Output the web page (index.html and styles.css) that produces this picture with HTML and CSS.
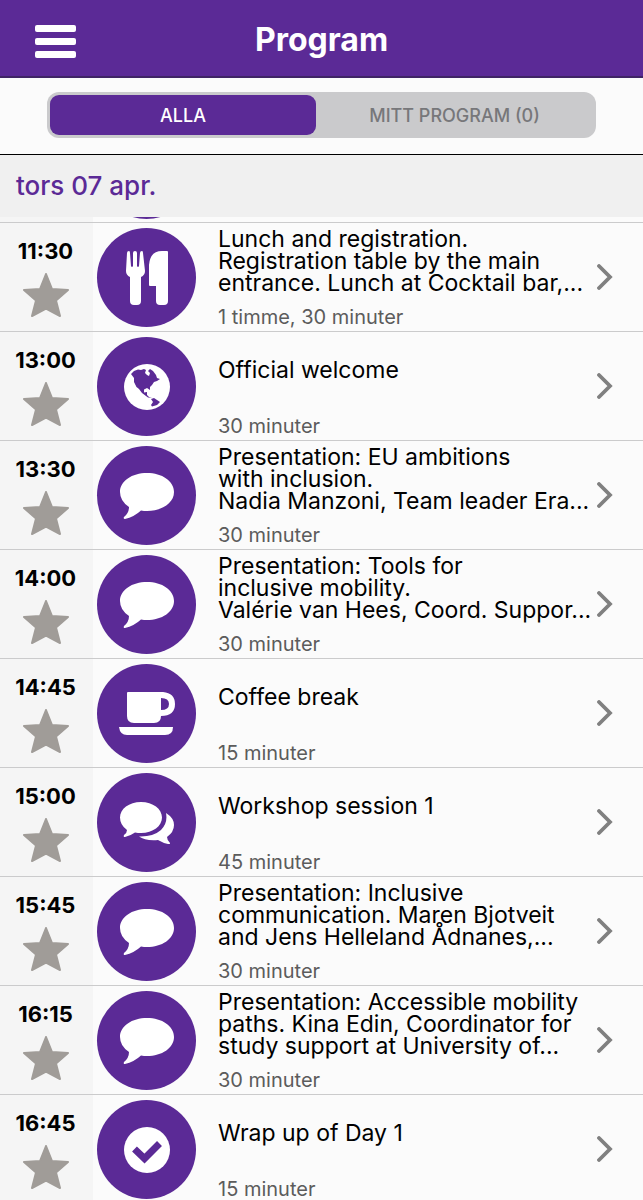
FILE: index.html
```html
<!DOCTYPE html>
<html lang="sv">
<head>
<meta charset="UTF-8">
<meta name="viewport" content="width=device-width, initial-scale=1.0">
<title>Program</title>
<link rel="stylesheet" href="styles.css">
</head>
<body>
<!-- shared icons -->
<svg class="defs" aria-hidden="true">
    <symbol id="star" viewBox="0 0 46 44">
        <path d="M23 1 L29 16 L45 17 L33 27.5 L37 43 L23 35.5 L9 43 L13 27.5 L1 17 L17 16 Z" stroke="currentColor" stroke-width="2" stroke-linejoin="round"/>
    </symbol>
    <symbol id="chevron" viewBox="0 0 16 26">
        <path d="M2 2 L13 13 L2 24" fill="none" stroke="currentColor" stroke-width="3.8" stroke-linecap="round"/>
    </symbol>
    <symbol id="food" viewBox="0 0 54 54">
        <path d="M7 2 Q7 0 9 0 Q10 0 10 2 L11 15 Q12 17 13 15 V2 Q13 0 15 0 Q17 0 17 2 V15 Q18 17 19 15 L20 2 Q20 0 22 0 Q23 0 23 2 L25 20 Q25 24 21 26 V50 Q21 54 17 54 H14 Q10 54 10 50 V26 Q6 24 6 20 Z"/>
        <path d="M48 1 V50 Q48 54 44 54 H40 Q36 54 36 50 V35 H30 Q29 35 29 34 V14 Q30 0 42 0 H47 Q48 0 48 1 Z"/>
    </symbol>
    <symbol id="globe" viewBox="0 0 46 46">
        <circle cx="23" cy="23" r="23"/>
        <path class="land" d="M7 10 L10 7 L14 5.500 L17 6 L20 5 L22 6 L21 9 L23 11 L25 12 L26 9 L24 7 L26 5 L29 7 L32 11 L33 14 L36 15 L33 17 L30 18 L28 21 L26 23 L26 26 L23 24 L20 25.500 L20 28.500 L23 28 L23 31 L25 33 L28 34 L24 33.500 L18 29 L15 25 L12.500 23 L10 18 L10 14 Z M27 35 L30 34 L33 36 L36 38 L33 41 L28 42.500 L27 41 L29 38 Z"/>
    </symbol>
    <symbol id="comment" viewBox="0 0 54 46">
        <path d="M27 0 C42 0 54 8 54 19 C54 30 42 38 27 38 Q24 38 21 37.5 Q14 44 5 46 Q3 46 4 44 Q9 40 9 34 Q0 28 0 19 C0 8 12 0 27 0 Z"/>
    </symbol>
    <symbol id="comments" viewBox="0 0 54 42">
        <path d="M21 0 C33 0 42 7 42 15.5 C42 24 33 31 21 31 Q18 31 15 30.5 Q10 34 5 35 Q3 35 4 33 Q7 31 7 28 Q0 23 0 15.5 C0 7 9 0 21 0 Z"/>
        <path d="M46 11 Q54 16 54 23 Q54 30 47 35 Q47 38 50 41 Q50 43 48 42 Q43 41 38 38 Q25 39 19 34.5 Q33 35 41 28 Q48 21 46 11 Z"/>
    </symbol>
    <symbol id="coffee" viewBox="0 0 56 44">
        <path fill-rule="evenodd" d="M9 0 H44 Q56 1 56 12 Q56 24 42 24 Q42 31 35 31 H15 Q8 31 8 24 V1 Q8 0 9 0 Z M42 6 V18 Q50 18 50 12 Q50 6 42 6 Z"/>
        <path d="M0 35 H54 Q54 43 46 43 H8 Q1 43 0 35 Z"/>
    </symbol>
    <symbol id="check" viewBox="0 0 46 46">
        <circle cx="23" cy="23" r="23"/>
        <path class="tick" d="M10.5 22 L20.500 31.500 L35.500 16.500"/>
    </symbol>
</svg>

<header class="topbar">
    <button class="menu" type="button" aria-label="Meny"><span></span><span></span><span></span></button>
    <h1>Program</h1>
</header>

<nav class="filter">
    <div class="tabs">
        <button class="tab active" type="button">ALLA</button>
        <button class="tab" type="button">MITT PROGRAM (0)</button>
    </div>
</nav>

<h2 class="day">tors 07 apr.</h2>

<main class="list">
    <!-- end of the item scrolled under the day heading -->
    <div class="row tail"><div class="when"></div><div class="badge"></div></div>

    <article class="row">
        <div class="when"><time>11:30</time><button class="fav" type="button" aria-label="Favorit"><svg><use href="#star"/></svg></button></div>
        <div class="badge"><svg class="icon-food"><use href="#food"/></svg></div>
        <div class="info">
            <h3>Lunch and registration.<br>Registration table by the main<br>entrance. Lunch at Cocktail bar,...</h3>
            <p>1 timme, 30 minuter</p>
        </div>
        <svg class="chevron"><use href="#chevron"/></svg>
    </article>

    <article class="row">
        <div class="when"><time>13:00</time><button class="fav" type="button" aria-label="Favorit"><svg><use href="#star"/></svg></button></div>
        <div class="badge"><svg class="icon-round"><use href="#globe"/></svg></div>
        <div class="info">
            <h3>Official welcome</h3>
            <p>30 minuter</p>
        </div>
        <svg class="chevron"><use href="#chevron"/></svg>
    </article>

    <article class="row">
        <div class="when"><time>13:30</time><button class="fav" type="button" aria-label="Favorit"><svg><use href="#star"/></svg></button></div>
        <div class="badge"><svg class="icon-comment"><use href="#comment"/></svg></div>
        <div class="info">
            <h3>Presentation: EU ambitions<br>with inclusion.<br>Nadia Manzoni, Team leader Era...</h3>
            <p>30 minuter</p>
        </div>
        <svg class="chevron"><use href="#chevron"/></svg>
    </article>

    <article class="row">
        <div class="when"><time>14:00</time><button class="fav" type="button" aria-label="Favorit"><svg><use href="#star"/></svg></button></div>
        <div class="badge"><svg class="icon-comment"><use href="#comment"/></svg></div>
        <div class="info">
            <h3>Presentation: Tools for<br>inclusive mobility.<br>Valérie van Hees, Coord. Suppor...</h3>
            <p>30 minuter</p>
        </div>
        <svg class="chevron"><use href="#chevron"/></svg>
    </article>

    <article class="row">
        <div class="when"><time>14:45</time><button class="fav" type="button" aria-label="Favorit"><svg><use href="#star"/></svg></button></div>
        <div class="badge"><svg class="icon-coffee"><use href="#coffee"/></svg></div>
        <div class="info">
            <h3>Coffee break</h3>
            <p>15 minuter</p>
        </div>
        <svg class="chevron"><use href="#chevron"/></svg>
    </article>

    <article class="row">
        <div class="when"><time>15:00</time><button class="fav" type="button" aria-label="Favorit"><svg><use href="#star"/></svg></button></div>
        <div class="badge"><svg class="icon-comments"><use href="#comments"/></svg></div>
        <div class="info">
            <h3>Workshop session 1</h3>
            <p>45 minuter</p>
        </div>
        <svg class="chevron"><use href="#chevron"/></svg>
    </article>

    <article class="row">
        <div class="when"><time>15:45</time><button class="fav" type="button" aria-label="Favorit"><svg><use href="#star"/></svg></button></div>
        <div class="badge"><svg class="icon-comment"><use href="#comment"/></svg></div>
        <div class="info">
            <h3>Presentation: Inclusive<br>communication. Maren Bjotveit<br>and Jens Helleland Ådnanes,...</h3>
            <p>30 minuter</p>
        </div>
        <svg class="chevron"><use href="#chevron"/></svg>
    </article>

    <article class="row">
        <div class="when"><time>16:15</time><button class="fav" type="button" aria-label="Favorit"><svg><use href="#star"/></svg></button></div>
        <div class="badge"><svg class="icon-comment"><use href="#comment"/></svg></div>
        <div class="info">
            <h3>Presentation: Accessible mobility<br>paths. Kina Edin, Coordinator for<br>study support at University of...</h3>
            <p>30 minuter</p>
        </div>
        <svg class="chevron"><use href="#chevron"/></svg>
    </article>

    <article class="row">
        <div class="when"><time>16:45</time><button class="fav" type="button" aria-label="Favorit"><svg><use href="#star"/></svg></button></div>
        <div class="badge"><svg class="icon-round"><use href="#check"/></svg></div>
        <div class="info">
            <h3>Wrap up of Day 1</h3>
            <p>15 minuter</p>
        </div>
        <svg class="chevron"><use href="#chevron"/></svg>
    </article>
</main>
</body>
</html>
```

FILE: styles.css
```css
* {
    margin: 0;
    padding: 0;
    box-sizing: border-box;
}

body {
    height: 100vh;
    display: flex;
    flex-direction: column;
    background: #fbfbfb;
    color: #000;
    font-family: Inter, "Open Sans", sans-serif;
}

button {
    border: none;
    background: none;
    font-family: inherit;
    cursor: pointer;
}

.defs {
    position: absolute;
    width: 0;
    height: 0;
}

/* top bar */
.topbar {
    flex: none;
    height: 78px;
    display: grid;
    grid-template-columns: 76px 1fr 76px;
    align-items: center;
    padding-bottom: 2px;
    background: #5b2a96;
    border-bottom: 2px solid #3f2465;
}

.menu {
    display: flex;
    flex-direction: column;
    gap: 6px;
    padding: 8px 0 0 35px;
}

.menu span {
    height: 7px;
    border-radius: 2px;
    background: #fff;
}

.topbar h1 {
    color: #fff;
    font-size: 32px;
    line-height: 36px;
    font-weight: 700;
    text-align: center;
    padding-top: 6px;
}

/* filter */
.filter {
    flex: none;
    padding: 14px 47px 16px;
    border-bottom: 1px solid #000;
}

.tabs {
    display: flex;
    padding: 3px;
    border-radius: 12px;
    background: #cacacc;
}

.tab {
    flex: 1;
    height: 40px;
    border-radius: 9px;
    color: #77777a;
    font-size: 18px;
    font-weight: 500;
}

.tab.active {
    flex: 0 0 49%;
    background: #5b2a96;
    color: #fff;
}

.day {
    flex: none;
    padding: 15px 16px;
    background: #f0f0f0;
    color: #5b2a96;
    font-size: 26px;
    line-height: 32px;
    font-weight: 500;
}

/* program list */
.list {
    flex: 1;
    min-height: 0;
    overflow-y: auto;
    scrollbar-width: none;
}

.row {
    display: grid;
    grid-template-columns: 93px 99px 1fr 16px;
    column-gap: 4px;
    height: 109px;
    padding-right: 30px;
    border-top: 1px solid #cbcbcc;
}

.tail {
    grid-template-rows: 100%;
    align-items: end;
    height: 5px;
    border-top: none;
    overflow: hidden;
}

.when {
    display: flex;
    flex-direction: column;
    align-items: center;
    height: 100%;
    padding: 14px 2px 0 0;
    background: #f5f5f5;
}

.when time {
    font-size: 22px;
    line-height: 28px;
    font-weight: 700;
}

.fav {
    margin-top: 8px;
    color: #a09c98;
}

.fav svg {
    display: block;
    width: 46px;
    height: 44px;
    fill: currentColor;
}

.badge {
    display: flex;
    justify-content: center;
    align-items: center;
    width: 99px;
    height: 99px;
    margin: 5px 0 3px;
    border-radius: 50%;
    background: #5b2a96;
}

.badge svg {
    fill: #fff;
}

.icon-food {
    width: 54px;
    height: 54px;
}

.icon-round {
    width: 46px;
    height: 46px;
}

.icon-comment {
    width: 54px;
    height: 46px;
}

.icon-comments {
    width: 54px;
    height: 42px;
}

.icon-coffee {
    width: 56px;
    height: 44px;
}

.land {
    fill: #5b2a96;
}

.tick {
    fill: none;
    stroke: #5b2a96;
    stroke-width: 7;
}

.info {
    padding: 5px 0 0 18px;
    white-space: nowrap;
}

.info h3 {
    display: flex;
    align-items: center;
    height: 66px;
    font-size: 23px;
    line-height: 22px;
    font-weight: 400;
}

.info p {
    margin-top: 12px;
    color: #5c5c5c;
    font-size: 20px;
    line-height: 22px;
}

.chevron {
    align-self: center;
    width: 16px;
    height: 26px;
    color: #808080;
}
```
